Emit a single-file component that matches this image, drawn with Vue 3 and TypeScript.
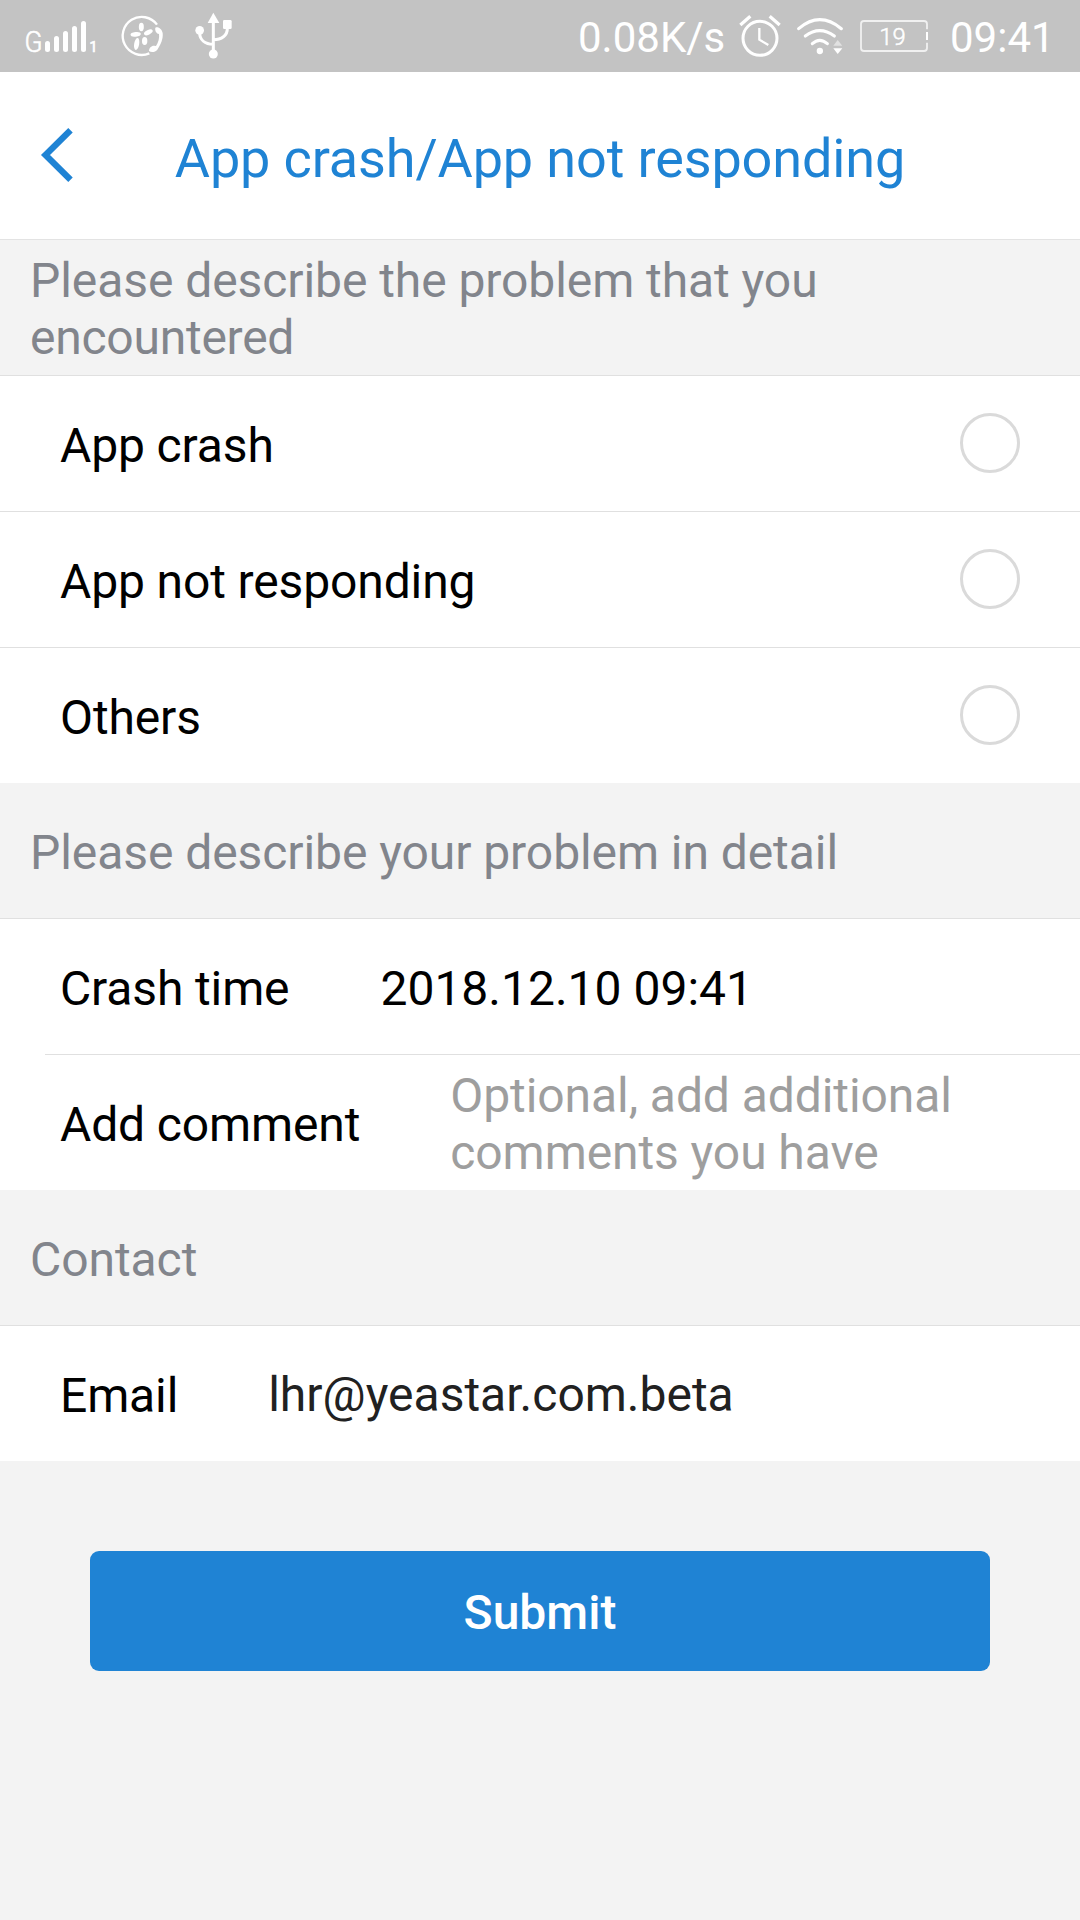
<script setup lang="ts">
import { ref } from 'vue'

const problems: string[] = ['App crash', 'App not responding', 'Others']
const selected = ref<string | null>(null)
const crashTime = ref('2018.12.10 09:41')
const email = ref('lhr@yeastar.com.beta')
</script>

<template>
  <div class="screen">
    <div class="status">
      <svg class="signal" viewBox="24 0 76 72" fill="#fff">
        <text x="24.5" y="52" font-size="29" font-weight="300" textLength="18" lengthAdjust="spacingAndGlyphs" stroke="#fff" stroke-width=".6">G</text>
        <rect x="45" y="41" width="5" height="11" rx="2.5" />
        <rect x="54" y="36" width="5" height="16" rx="2.5" />
        <rect x="63" y="31" width="5" height="21" rx="2.5" />
        <rect x="72" y="26" width="5" height="26" rx="2.5" />
        <rect x="81" y="21" width="5" height="31" rx="2.5" />
        <text x="89.5" y="52" font-size="14" stroke="#fff" stroke-width=".7">1</text>
      </svg>
      <svg class="call" viewBox="360 0 135 216" fill="#fff">
        <path d="M471 74A57 57 0 1 0 448 160" fill="none" stroke="#fff" stroke-width="7" />
        <ellipse cx="424" cy="81" rx="7.500" ry="12.500" />
        <ellipse cx="445" cy="97" rx="14" ry="7" transform="rotate(-25 445 97)" />
        <ellipse cx="407" cy="103" rx="15.500" ry="7" transform="rotate(-6 407 103)" />
        <ellipse cx="434" cy="123" rx="8" ry="12" />
        <ellipse cx="410" cy="132" rx="7.500" ry="18" transform="rotate(10 410 132)" />
        <path d="M466 83C474 78 486 87 488 99C490 117 482 134 472 149C466 157 453 158 447 153C447 143 455 136 463 137L468 138C475 128 479 114 477 102C470 101 464 93 466 83Z" />
      </svg>
      <svg class="usb" viewBox="585 0 114 216" fill="#fff">
        <path d="M640 38L658 69H623Z" />
        <circle cx="599" cy="91" r="13" />
        <circle cx="640" cy="162" r="13.500" />
        <rect x="669" y="60" width="26" height="27" rx="4" />
        <path d="M640 60V160M599 98C599 119 615 132 640 133M682 84C683 107 664 119 640 119" fill="none" stroke="#fff" stroke-width="9" />
      </svg>
      <span class="speed">0.08K/s</span>
      <svg class="alarm" viewBox="531 0 138 216" fill="none" stroke="#fff">
        <circle cx="600" cy="115" r="51" stroke-width="9" />
        <path d="M598 84V119L625 135" stroke-width="7" />
        <path d="M541 75L571 49M629 49L659 75" stroke-width="10" />
      </svg>
      <svg class="wifi" viewBox="45 0 150 216" fill="#fff">
        <path d="M56 86Q119 32 184 86M76 108Q119 76 163 108M97 131Q119 111 142 131" fill="none" stroke="#fff" stroke-width="9.500" stroke-linecap="round" />
        <circle cx="119.500" cy="153" r="9.500" />
        <path d="M173 120L187 137H160Z" opacity=".5" />
        <path d="M160 145H187L173 162Z" />
      </svg>
      <svg class="battery" viewBox="234 0 216 216" fill="none" stroke="#fff">
        <path d="M441 88V72Q441 63 432 63H252Q243 63 243 72V144Q243 153 252 153H432Q441 153 441 144V128" stroke-width="5.500" opacity=".75" />
        <path d="M441 96V120" stroke-width="6" />
        <text x="298" y="135" font-size="72" font-weight="300" textLength="79" lengthAdjust="spacingAndGlyphs" fill="#fff" stroke-width="1.500">19</text>
      </svg>
      <span class="clock">09:41</span>
    </div>

    <header class="header">
      <svg class="back" viewBox="108 -84 126 501" fill="none" stroke="#1f83d4" stroke-width="19">
        <path d="M211.500 91L136.500 165L211.500 239" />
      </svg>
      <h1>App crash/App not responding</h1>
    </header>

    <h2 class="section tall">
      <span>Please describe the problem that you <span class="tight">encountered</span></span>
    </h2>
    <div
      v-for="problem in problems"
      :key="problem"
      class="row option"
      @click="selected = problem"
    >
      <span class="label">{{ problem }}</span>
      <i class="radio" :class="{ on: selected === problem }"></i>
    </div>

    <h2 class="section">Please describe your problem in detail</h2>
    <div class="row time">
      <span class="label">Crash time</span>
      <span class="value">{{ crashTime }}</span>
    </div>
    <div class="row inset">
      <span class="label">Add comment</span>
      <span class="value hint">Optional, add additional comments you have</span>
    </div>

    <h2 class="section">Contact</h2>
    <div class="row">
      <span class="label">Email</span>
      <span class="value email">{{ email }}</span>
    </div>

    <button class="submit" type="button">Submit</button>
  </div>
</template>

<style>
body {
  background: #f3f3f3;
}
</style>

<style scoped>
.screen {
  width: 1080px;
  height: 1920px;
  overflow: hidden;
  display: flex;
  flex-direction: column;
  background: #f3f3f3;
  color: #000;
  font-family: Roboto, 'Liberation Sans', sans-serif;
  font-size: 48px;
  line-height: 57px;
}

.status {
  flex: none;
  display: flex;
  height: 72px;
  background: #c3c3c3;
  color: #fff;
  font-size: 42px;
  line-height: 76px;
  white-space: nowrap;
}

.status svg {
  flex: none;
  height: 72px;
}

.signal {
  width: 76px;
  margin-left: 24px;
}

.call {
  width: 45px;
  margin-left: 20px;
}

.usb {
  width: 38px;
  margin-left: 30px;
}

.speed {
  width: 159px;
  margin-left: auto;
}

.alarm {
  width: 46px;
}

.wifi {
  width: 50px;
  margin-left: 12px;
}

.battery {
  width: 72px;
  margin-left: 13px;
}

.clock {
  width: 130px;
  margin-left: 20px;
}

.header {
  flex: none;
  display: grid;
  grid-template-columns: 144px 1fr 144px;
  height: 167px;
  background: #fff;
  border-bottom: 1px solid #e3e3e3;
}

.back {
  width: 42px;
  height: 167px;
  margin-left: 36px;
}

h1 {
  margin: 0;
  color: #1f83d4;
  font-size: 54px;
  font-weight: 400;
  line-height: 173px;
  letter-spacing: -0.13px;
  text-align: center;
  white-space: nowrap;
}

.section {
  flex: none;
  display: flex;
  align-items: center;
  box-sizing: border-box;
  height: 135px;
  margin: 0;
  padding: 4px 200px 0 30px;
  color: #82858c;
  font-size: 48px;
  font-weight: 400;
  letter-spacing: -0.07px;
}

.tall {
  padding-top: 2px;
}

.tight {
  letter-spacing: -0.25px;
}

.row {
  position: relative;
  flex: none;
  display: flex;
  align-items: center;
  gap: 90px;
  box-sizing: border-box;
  height: 136px;
  padding: 4px 60px 0;
  border-top: 1px solid #e0e0e0;
  background: #fff;
}

.time {
  gap: 91px;
}

.label {
  letter-spacing: -0.13px;
}

.option {
  justify-content: space-between;
}

.radio {
  box-sizing: border-box;
  width: 60px;
  height: 60px;
  margin-top: -6px;
  border: 3px solid #dadada;
  border-radius: 50%;
}

.radio.on {
  border: 18px solid #1f83d4;
}

.inset {
  border-top: 0;
}

.inset::before {
  content: '';
  position: absolute;
  top: 0;
  right: 0;
  left: 45px;
  height: 1px;
  background: #e0e0e0;
}

.hint {
  width: 520px;
  color: #9e9e9e;
  letter-spacing: -0.08px;
}

.email {
  margin-top: -2px;
  color: #212121;
}

.submit {
  flex: none;
  height: 120px;
  margin: 90px 90px 0;
  padding: 2px 0 0;
  border: 0;
  border-radius: 9px;
  background: #1f83d4;
  color: #fff;
  font: 500 48px/57px Roboto, 'Liberation Sans', sans-serif;
}
</style>
